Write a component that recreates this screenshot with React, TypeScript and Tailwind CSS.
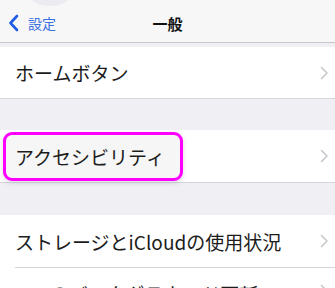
import React from "react";

const font = { fontFamily: '"Noto Sans CJK JP", "Noto Sans", sans-serif' };

function Chevron() {
  return (
    <svg width="9" height="14" viewBox="0 0 9 14" className="shrink-0">
      <path d="M1.5 1.5 L7 7 L1.5 12.5" fill="none" stroke="#c7c7cc" strokeWidth="1.6" strokeLinecap="round" strokeLinejoin="round" />
    </svg>
  );
}

export default function App() {
  return (
    <div className="w-[335px] h-[288px] overflow-hidden bg-[#efeff4] flex flex-col" style={font}>
      {/* Nav bar */}
      <div className="relative h-[43px] shrink-0 bg-[#f7f7f8] border-b border-[#c8c7cc] flex items-center pt-[4px] overflow-hidden">
        <div className="absolute left-[22px] top-[-46px] w-[56px] h-[52px] rounded-full bg-[#ebebf1]" />
        <div className="flex items-center pl-[8px] gap-[9px] w-[110px]">
          <svg width="11" height="18" viewBox="0 0 11 18">
            <path d="M9 2 L2.5 9 L9 16" fill="none" stroke="#1f5be6" strokeWidth="2.6" strokeLinecap="round" strokeLinejoin="round" />
          </svg>
          <span className="text-[14px] text-[#3a6fe0] leading-none">設定</span>
        </div>
        <div className="flex-1 flex justify-center pr-[110px]">
          <span className="text-[15px] font-bold text-[#111] leading-none">一般</span>
        </div>
      </div>

      <div className="h-[4px] shrink-0" />

      {/* Row 1 */}
      <div className="h-[52px] shrink-0 bg-white border-b border-[#d6d6da] flex items-center pl-[15px] pr-[6px]">
        <span className="flex-1 text-[19px] text-[#1c1c1c] leading-none">ホームボタン</span>
        <Chevron />
      </div>

      <div className="h-[31px] shrink-0" />

      {/* Row 2 */}
      <div className="h-[53px] shrink-0 bg-white border-b border-[#d6d6da] flex items-center pl-[3px] pr-[6px]">
        <div className="flex-1">
          <div className="w-[180px] h-[49px] border-[3px] border-[#ff00ff] rounded-[9px] bg-[#f6f6f6] flex items-center pl-[9px] shadow-[0_2px_5px_rgba(120,120,160,0.25)]">
            <span className="text-[19px] text-[#1c1c1c] leading-none">アクセシビリティ</span>
          </div>
        </div>
        <Chevron />
      </div>

      <div className="h-[32px] shrink-0" />

      {/* Row 3 */}
      <div className="bg-white shrink-0 flex flex-col">
        <div className="h-[52px] flex items-center pl-[15px] pr-[6px]">
          <span className="flex-1 text-[19px] text-[#1c1c1c] leading-none">ストレージとiCloudの使用状況</span>
          <Chevron />
        </div>
        <div className="ml-[15px] h-px bg-[#d6d6da]" />
        <div className="h-[52px] flex items-start pt-[16px] pl-[15px] pr-[6px]">
          <span className="flex-1 text-[19px] text-[#1c1c1c] leading-none">Appのバックグラウンド更新</span>
          <Chevron />
        </div>
      </div>
    </div>
  );
}
